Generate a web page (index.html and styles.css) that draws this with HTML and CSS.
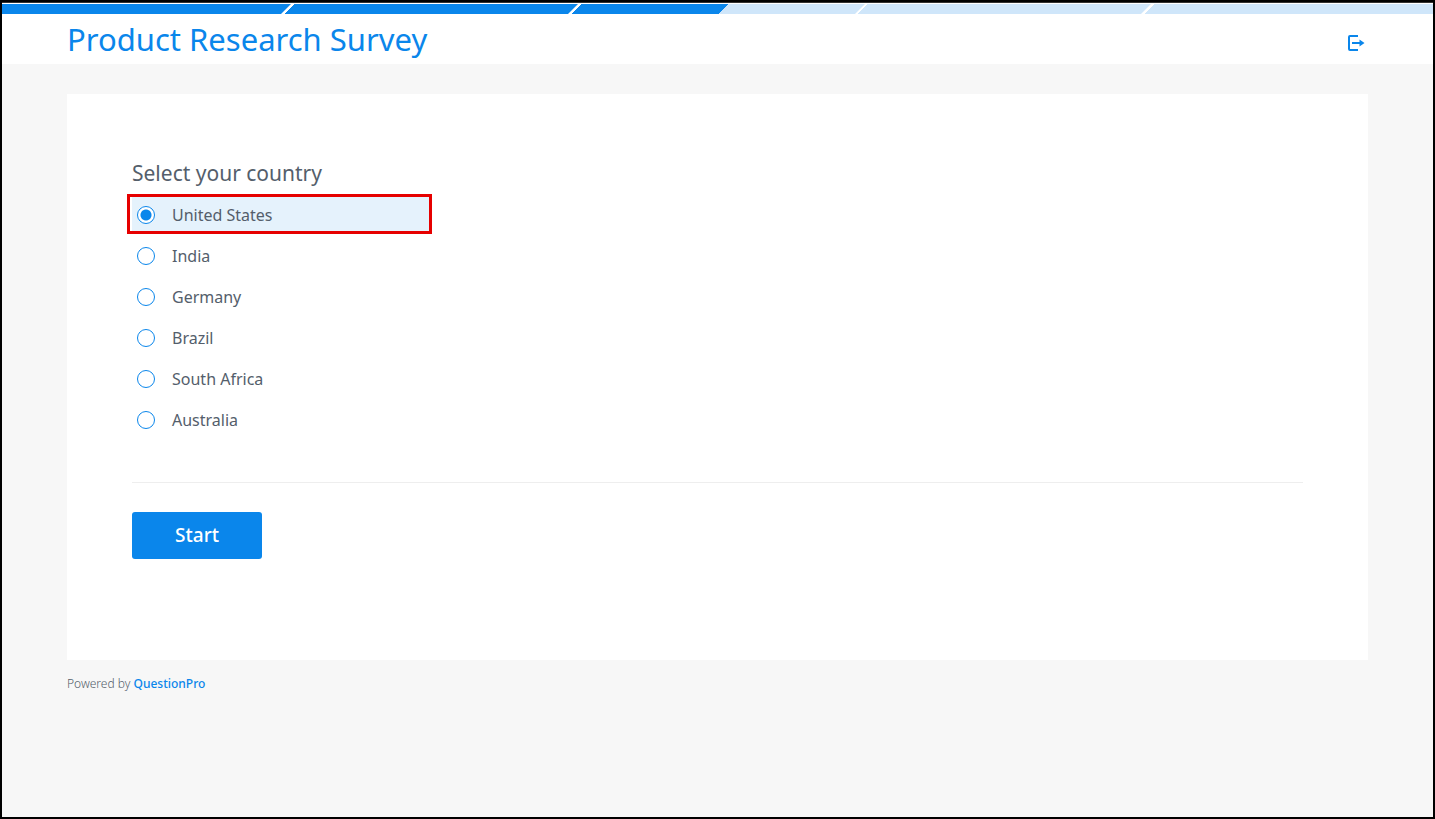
FILE: index.html
```
<!DOCTYPE html>
<html lang="en">
<head>
    <meta charset="UTF-8">
    <meta name="viewport" content="width=device-width, initial-scale=1.0">
    <title>Product Research Survey</title>
    <link rel="stylesheet" href="styles.css">
</head>
<body>
    <header class="header">
        <div class="progress" role="progressbar" aria-label="Survey progress" aria-valuemin="0" aria-valuemax="100" aria-valuenow="50">
            <span class="step done"></span>
            <span class="step done"></span>
            <span class="step half"></span>
            <span class="step"></span>
            <span class="step"></span>
        </div>
        <div class="container header-row">
            <h1>Product Research Survey</h1>
            <a class="exit" href="#" aria-label="Exit survey">
                <svg width="18" height="18" viewBox="0 0 18 18">
                    <path d="M11 2H3Q2 2 2 3V15Q2 16 3 16H11" fill="none" stroke="currentColor" stroke-width="2"/>
                    <path d="M5 8H12.500V5.500L17.500 9L12.500 12.500V10H5Z" fill="currentColor"/>
                </svg>
            </a>
        </div>
    </header>

    <main class="container">
        <form class="card">
            <fieldset class="question">
                <legend>Select your country</legend>
                <div class="options">
                    <label class="option selected"><input type="radio" name="country" value="us" checked>United States</label>
                    <label class="option"><input type="radio" name="country" value="in">India</label>
                    <label class="option"><input type="radio" name="country" value="de">Germany</label>
                    <label class="option"><input type="radio" name="country" value="br">Brazil</label>
                    <label class="option"><input type="radio" name="country" value="za">South Africa</label>
                    <label class="option"><input type="radio" name="country" value="au">Australia</label>
                </div>
            </fieldset>
            <div class="actions">
                <button class="start" type="button">Start</button>
            </div>
        </form>
    </main>

    <footer class="container footer">
        Powered by <a href="#">QuestionPro</a>
    </footer>
</body>
</html>
```

FILE: styles.css
```
* {
    box-sizing: border-box;
}

body {
    margin: 0;
    min-height: 100vh;
    border: 2px solid #000;
    background-color: #f7f7f7;
    color: #545e6b;
    font-family: "Noto Sans", "Open Sans", sans-serif;
    font-size: 16px;
}

a {
    color: #0a86eb;
    text-decoration: none;
}

.container {
    width: 100%;
    max-width: 1301px;
    margin: 0 auto;
}

.header {
    padding-top: 1px;
    border-top: 1px solid #333;
    background-color: #fff;
}

/* progress bar */
.progress {
    display: flex;
    height: 10px;
    overflow: hidden;
}

.step {
    flex: 1;
    border-right: 3px solid #fff;
    background-color: #cfe6fa;
    background-clip: padding-box;
    transform: skewX(-45deg);
}

.step:first-child {
    box-shadow: -10px 0 #0a86eb;
}

.step:last-child {
    border-right: none;
    box-shadow: 10px 0 #cfe6fa;
}

.step.done {
    background-color: #0a86eb;
}

.step.half {
    background-image: linear-gradient(to right, #0a86eb 52%, transparent 52%);
}

.header-row {
    display: flex;
    align-items: center;
    justify-content: space-between;
    height: 50px;
}

h1 {
    margin: 0;
    color: #0a86eb;
    font-size: 31px;
    font-weight: 400;
    line-height: 40px;
}

.exit {
    display: flex;
    padding-top: 8px;
    padding-right: 3px;
}

/* question card */
.card {
    margin-top: 30px;
    padding: 64px 65px 101px;
    background-color: #fff;
}

.question {
    margin: 0;
    padding: 0;
    border: none;
}

legend {
    padding: 0;
    margin-bottom: 9px;
    font-size: 21px;
    line-height: 30px;
}

.options {
    display: flex;
    flex-direction: column;
    gap: 5px;
    max-width: 298px;
}

.option {
    display: flex;
    align-items: center;
    gap: 17px;
    height: 36px;
    padding: 0 5px;
    line-height: 20px;
    cursor: pointer;
}

.option input {
    appearance: none;
    width: 18px;
    height: 18px;
    margin: 0;
    border: 1px solid #0a86eb;
    border-radius: 50%;
    background-color: #fff;
}

.option input:checked {
    background-image: radial-gradient(circle, #0a86eb 5px, transparent 6px);
}

.option.selected {
    position: relative;
    background-color: #e5f2fc;
}

.option.selected::before {
    content: "";
    position: absolute;
    inset: -3px -2px -1px -5px;
    border: 3px solid #e60000;
}

.actions {
    margin-top: 44px;
    padding-top: 29px;
    border-top: 1px solid #eee;
}

.start {
    padding: 8px 42px;
    min-width: 130px;
    border: none;
    border-radius: 3px;
    background-color: #0a86eb;
    color: #fff;
    font-family: inherit;
    font-size: 19px;
    font-weight: 500;
    line-height: 31px;
    cursor: pointer;
}

.footer {
    margin-top: 14px;
    font-size: 12px;
    font-weight: 300;
    line-height: 20px;
}

.footer a {
    font-weight: 500;
}
```
